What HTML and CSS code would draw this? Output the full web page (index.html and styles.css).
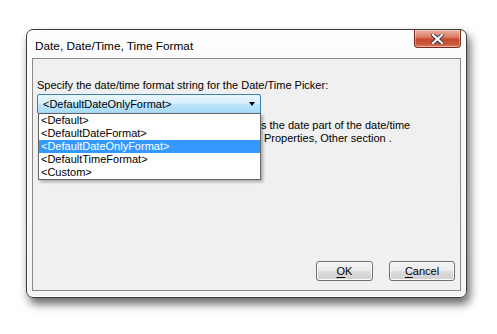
FILE: index.html
```html
<!DOCTYPE html>
<html>
<head>
<meta charset="utf-8">
<link rel="stylesheet" href="styles.css">
</head>
<body>
<div class="window">
  <div class="titlebar">
    <div class="title">Date, Date/Time, Time Format</div>
    <div class="close">
      <svg width="13" height="10" viewBox="0 0 13 10">
        <path d="M2 1 L11 9 M11 1 L2 9" stroke="#3a3a4a" stroke-width="4" stroke-linecap="square"/>
        <path d="M2 1 L11 9 M11 1 L2 9" stroke="#ffffff" stroke-width="2.2" stroke-linecap="square"/>
      </svg>
    </div>
  </div>
  <div class="panel">
    <div class="label">Specify the date/time format string for the Date/Time Picker:</div>
    <div class="combo-wrap">
      <div class="combo">
        <span class="combo-text">&lt;DefaultDateOnlyFormat&gt;</span>
        <span class="arrow"></span>
      </div>
      <ul class="list">
        <li>&lt;Default&gt;</li>
        <li>&lt;DefaultDateFormat&gt;</li>
        <li class="sel">&lt;DefaultDateOnlyFormat&gt;</li>
        <li>&lt;DefaultTimeFormat&gt;</li>
        <li>&lt;Custom&gt;</li>
      </ul>
    </div>
    <div class="desc">
      <div class="l1">s the date part of the date/time</div>
      <div class="l2">Properties, Other section .</div>
    </div>
    <div class="spacer"></div>
    <div class="buttons">
      <div class="btn ok"><span><u>O</u>K</span></div>
      <div class="btn cancel"><span><u>C</u>ancel</span></div>
    </div>
  </div>
</div>
</body>
</html>
```

FILE: styles.css
```css
html, body {
  margin: 0;
  padding: 0;
  background: #ffffff;
  width: 497px;
  height: 334px;
  overflow: hidden;
  font-family: "Liberation Sans", "DejaVu Sans", sans-serif;
  font-size: 11px;
  color: #000;
}
.window {
  position: relative;
  margin-left: 26px;
  margin-top: 29px;
  width: 441px;
  height: 269px;
  box-sizing: border-box;
  border: 1px solid #3c3c3c;
  border-radius: 7px;
  background: linear-gradient(#fdfdfd, #f4f4f4);
  box-shadow: 3px 6px 10px rgba(0,0,0,0.6), inset 0 0 0 1px #ffffff;
  display: flex;
  flex-direction: column;
}
.titlebar {
  height: 28px;
  display: flex;
  align-items: flex-start;
  flex-shrink: 0;
}
.title {
  margin-left: 8px;
  margin-top: 9px;
  line-height: 14px;
  font-size: 11.8px;
}
.close {
  margin-left: auto;
  margin-right: 5px;
  width: 47px;
  height: 18px;
  box-sizing: border-box;
  border: 1px solid #7a2a1c;
  border-top: none;
  border-radius: 0 0 4px 4px;
  background: linear-gradient(#eab1a2 0%, #dc8069 40%, #c8492e 55%, #c95a3e 85%, #df8e73 100%);
  display: flex;
  align-items: center;
  justify-content: center;
  box-shadow: inset 0 0 0 1px rgba(255,255,255,0.35);
}
.close svg { display: block; margin-top: 1px; }
.panel {
  margin: 0 5px 6px 5px;
  flex: 1;
  box-sizing: border-box;
  border: 1px solid #8a8a8a;
  background: #f0f0f0;
  padding: 20px 5px 9px 4px;
  display: flex;
  flex-direction: column;
}
.label {
  line-height: 13px;
  height: 13px;
  margin-bottom: 2px;
}
.combo-wrap {
  position: relative;
  width: 224px;
}
.combo {
  height: 20px;
  box-sizing: border-box;
  border: 1px solid #3c7fb1;
  border-radius: 2px;
  background: linear-gradient(#eaf6fd 0%, #d9f0fc 45%, #bee6fd 50%, #a7d9f5 100%);
  display: flex;
  align-items: center;
  padding-left: 5px;
  line-height: 14px;
}
.arrow {
  margin-left: auto;
  margin-right: 5px;
  width: 0;
  height: 0;
  border-left: 3.5px solid transparent;
  border-right: 3.5px solid transparent;
  border-top: 4px solid #000;
}
.list {
  position: absolute;
  left: 1px;
  top: 19px;
  width: 223px;
  margin: 0;
  padding: 0;
  list-style: none;
  background: #fff;
  border: 1px solid #646464;
  box-sizing: border-box;
  box-shadow: 2px 2px 3px rgba(0,0,0,0.3);
  z-index: 2;
}
.list li {
  height: 13px;
  line-height: 13px;
  padding-left: 2px;
}
.list li.sel {
  background: #3399ff;
  color: #fff;
}
.desc {
  margin-top: 5px;
  line-height: 13px;
  white-space: nowrap;
}
.desc .l1 { margin-left: 224px; }
.desc .l2 { margin-left: 227px; }
.spacer { flex: 1; }
.buttons {
  display: flex;
  justify-content: flex-end;
  gap: 16px;
}
.btn {
  height: 20px;
  box-sizing: border-box;
  border: 1px solid #707070;
  border-radius: 3px;
  background: linear-gradient(#f2f2f2 0%, #ebebeb 50%, #dddddd 51%, #cfcfcf 100%);
  box-shadow: inset 0 0 0 1px #fcfcfc;
  display: flex;
  align-items: center;
  justify-content: center;
  line-height: 14px;
}
.btn.ok { width: 57px; }
.btn.cancel { width: 66px; }
.btn u { text-decoration: underline; text-underline-offset: 2px; }
```
